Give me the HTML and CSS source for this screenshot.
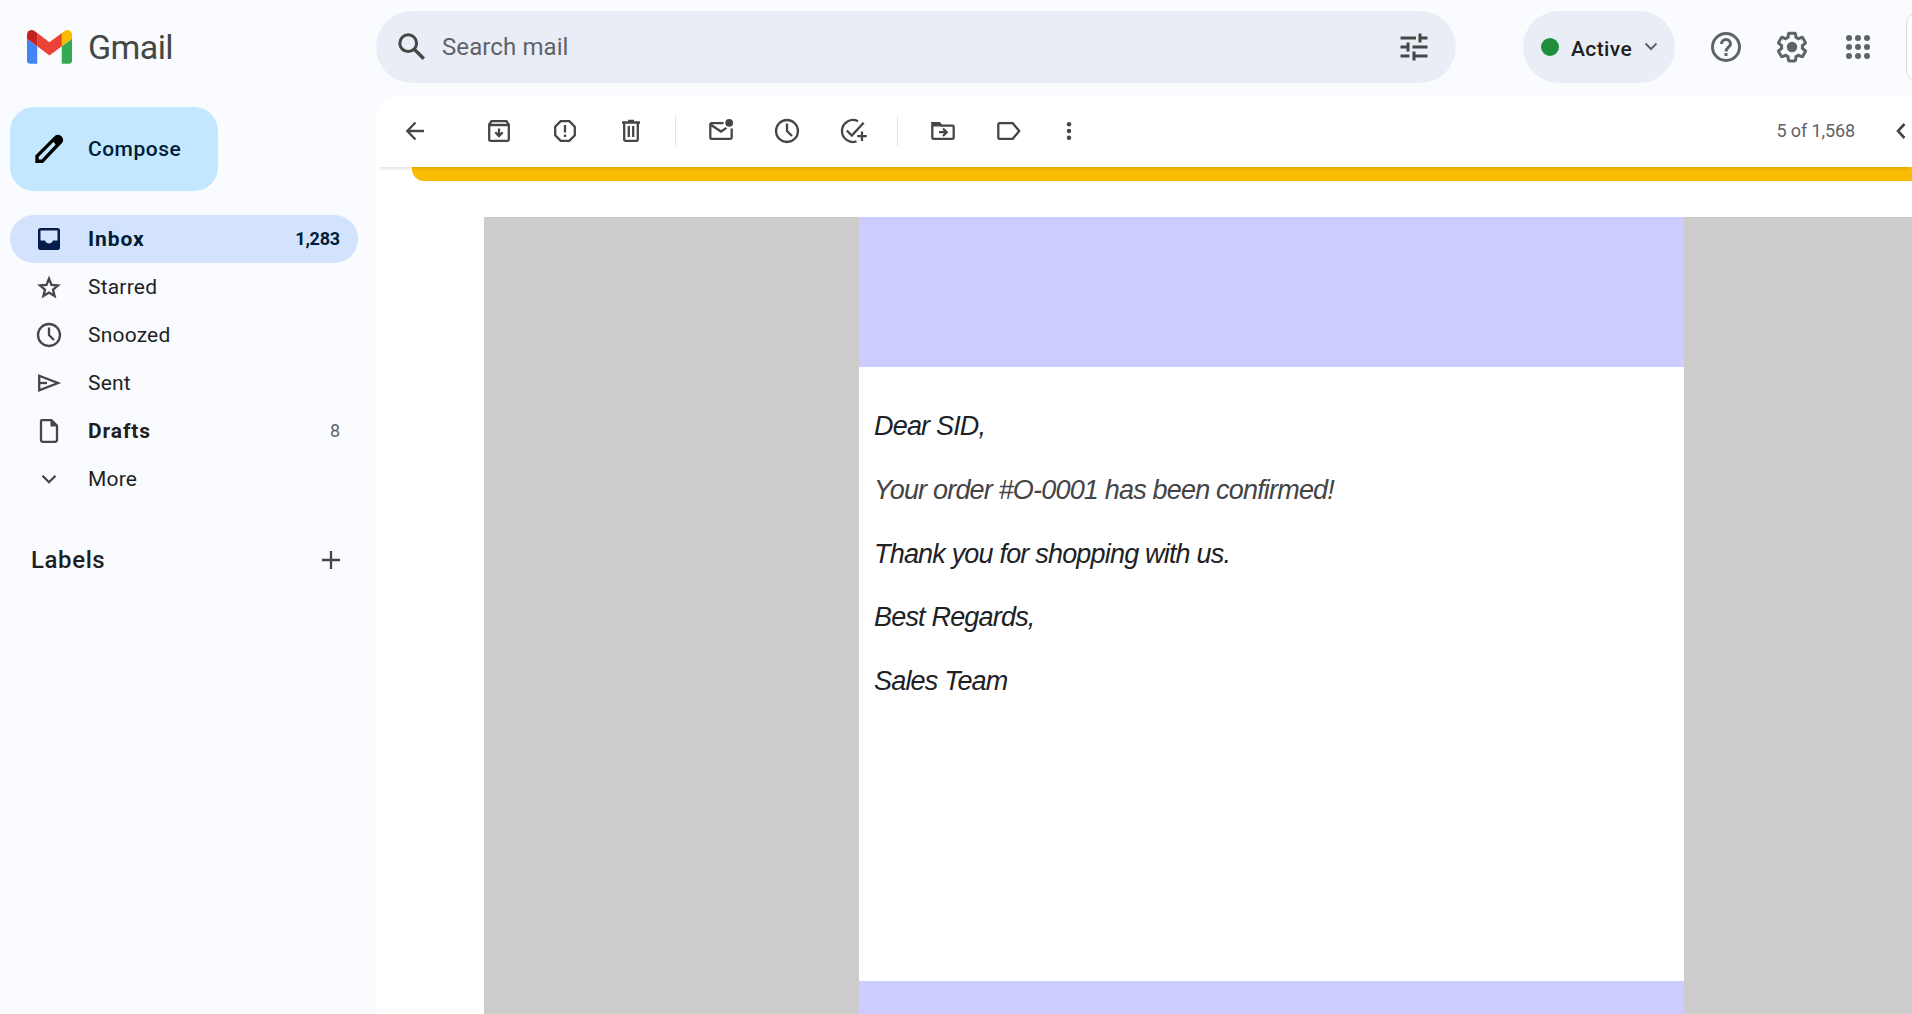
FILE: index.html
```html
<!DOCTYPE html>
<html lang="en">
<head>
<meta charset="utf-8">
<title>Gmail</title>
<link rel="stylesheet" href="styles.css">
</head>
<body>
<header class="topbar">
  <div class="brand">
    <svg class="brand-mark" viewBox="52 42 88 66"><path fill="#4285f4" d="M58 108h14V74L52 59v43c0 3.32 2.69 6 6 6"/><path fill="#34a853" d="M120 108h14c3.32 0 6-2.69 6-6V59l-20 15"/><path fill="#fbbc04" d="M120 48v26l20-15v-8c0-7.42-8.47-11.65-14.4-7.2"/><path fill="#ea4335" d="M72 74V48l24 18 24-18v26L96 92"/><path fill="#c5221f" d="M52 51v8l20 15V48l-5.6-4.2c-5.94-4.45-14.4-.22-14.4 7.2"/></svg>
    <span class="brand-name">Gmail</span>
  </div>
  <div class="search">
    <svg class="icon search-icon" viewBox="0 0 36 36"><circle cx="14.2" cy="14.2" r="8.4" stroke-width="3"/><path stroke-width="3.4" d="M20 20l9.8 9.8"/></svg>
    <span class="search-hint">Search mail</span>
    <svg class="icon tune-icon" viewBox="0 0 36 36"><path stroke-width="3" d="M4.5 9H20M24 4.5v9M24 9h7.500M4.500 18H12M12 13.500v9M16.500 18h15M4.500 27H13.500M18 22.500v9M18 27h13.500"/></svg>
  </div>
  <div class="status"><span class="status-dot"></span><span class="status-text">Active</span>
    <svg class="icon status-arrow" viewBox="0 0 14 10"><path stroke-width="2" d="M1.500 1.500L7 7l5.500-5.500"/></svg>
  </div>
  <div class="tools">
    <svg class="icon tool" viewBox="0 0 36 36"><circle cx="18" cy="18" r="13.500" stroke-width="3"/><path stroke-width="3" d="M13.500 15a4.500 4.500 0 1 1 9 0c0 3-4.500 3.400-4.500 7.500"/><path class="solid" d="M16.500 24h3v3h-3z"/></svg>
    <svg class="icon tool" viewBox="0 0 24 24"><path class="solid" d="M13.850 22.250h-3.700c-.740 0-1.360-.540-1.450-1.270l-.270-1.890c-.270-.140-.530-.290-.790-.460l-1.800.720c-.700.260-1.470-.030-1.810-.650L2.200 15.530c-.350-.660-.200-1.440.360-1.880l1.530-1.190c-.010-.150-.020-.300-.020-.460s.010-.310.020-.460l-1.520-1.190c-.590-.450-.740-1.260-.370-1.880l1.850-3.190c.340-.620 1.110-.900 1.790-.630l1.810.730c.260-.170.520-.320.780-.460l.270-1.910c.090-.700.710-1.250 1.440-1.250h3.700c.740 0 1.360.540 1.450 1.270l.270 1.890c.270.140.530.290.790.460l1.800-.720c.710-.260 1.480.030 1.820.650l1.840 3.180c.360.660.200 1.440-.360 1.880l-1.520 1.190c.010.150.020.300.020.460s-.010.310-.020.460l1.520 1.190c.560.450.720 1.230.370 1.860l-1.860 3.220c-.340.620-1.110.900-1.800.630l-1.800-.720c-.260.170-.520.320-.780.460l-.270 1.910c-.100.680-.720 1.220-1.460 1.220zm-3.230-2h2.760l.370-2.550.530-.220c.440-.180.880-.440 1.340-.780l.450-.340 2.380.960 1.380-2.400-2.030-1.580.070-.560c.030-.260.060-.510.060-.780s-.030-.530-.060-.780l-.070-.560 2.030-1.580-1.390-2.400-2.390.960-.450-.350c-.420-.320-.870-.580-1.330-.770l-.520-.220-.370-2.550h-2.760l-.370 2.550-.530.210c-.440.190-.880.440-1.340.790l-.450.330-2.380-.950-1.390 2.390 2.030 1.580-.070.560a7 7 0 0 0-.060.790c0 .260.020.530.060.780l.070.560-2.030 1.580 1.380 2.400 2.390-.960.450.350c.430.330.860.580 1.330.770l.530.220z"/><circle class="solid" cx="12" cy="12" r="3.500"/></svg>
    <svg class="icon tool" viewBox="0 0 36 36"><g class="solid"><circle cx="9" cy="9" r="3"/><circle cx="18" cy="9" r="3"/><circle cx="27" cy="9" r="3"/><circle cx="9" cy="18" r="3"/><circle cx="18" cy="18" r="3"/><circle cx="27" cy="18" r="3"/><circle cx="9" cy="27" r="3"/><circle cx="18" cy="27" r="3"/><circle cx="27" cy="27" r="3"/></g></svg>
  </div>
  <div class="account"></div>
</header>
<div class="workspace">
  <nav class="sidebar">
    <button class="compose"><svg class="icon compose-icon" viewBox="0 0 36 36"><path stroke-width="3.400" d="M6 30.300v-5.200L25 6.100a2.600 2.600 0 0 1 3.700 0l1 1a2.600 2.600 0 0 1 0 3.700L11.200 30.300z"/><path class="solid" d="M21.500 9.500l4-4h5.500v6l-4.500 4.500z"/></svg><span>Compose</span></button>
    <ul class="folders">
      <li class="folder current"><svg class="icon" viewBox="0 0 30 30"><path class="solid" fill-rule="evenodd" d="M6.500 4h17A2.500 2.500 0 0 1 26 6.500v17a2.500 2.500 0 0 1-2.500 2.500h-17A2.500 2.500 0 0 1 4 23.500v-17A2.500 2.500 0 0 1 6.500 4zM6.500 6.500v10H11c.800 1.800 2.200 3 4 3s3.200-1.200 4-3h4.500v-10z"/></svg><span class="name">Inbox</span><span class="count">1,283</span></li>
      <li class="folder"><svg class="icon" viewBox="0 0 30 30"><path d="M15 6.700l2.500 6.200 6.500.500-5 4.200 1.600 6.500L15 20.600l-5.600 3.500 1.600-6.500-5-4.200 6.500-.500z"/></svg><span class="name">Starred</span></li>
      <li class="folder"><svg class="icon" viewBox="0 0 30 30"><circle cx="15" cy="15" r="11"/><path d="M15 7.500V15l5 5"/></svg><span class="name">Snoozed</span></li>
      <li class="folder"><svg class="icon" viewBox="0 0 30 30"><path d="M5.200 7.700L24 15 5.200 22.300z"/><path d="M5.200 15H13"/></svg><span class="name">Sent</span></li>
      <li class="folder strong"><svg class="icon" viewBox="0 0 30 30"><path d="M8 4.200h9.500L23 9.700V24a1.800 1.800 0 0 1-1.800 1.800H8.800A1.800 1.800 0 0 1 7 24V5.200a1 1 0 0 1 1-1z"/><path class="solid" d="M16.500 4.500v6H23z"/></svg><span class="name">Drafts</span><span class="count">8</span></li>
      <li class="folder"><svg class="icon" viewBox="0 0 30 30"><path d="M8.500 11.700l6.500 6.500 6.500-6.500"/></svg><span class="name">More</span></li>
    </ul>
    <div class="labels"><h2>Labels</h2><svg class="icon" viewBox="0 0 30 30"><path d="M15 6v18M6 15h18"/></svg></div>
  </nav>
  <main class="panel">
    <div class="toolbar">
      <svg class="icon back" viewBox="0 0 30 30"><path d="M24 15H7.500M15.500 6.500L7.300 15l8.200 8.500"/></svg>
      <div class="group">
        <svg class="icon" viewBox="0 0 30 30"><path d="M5.200 8.500L7.500 5.200h15l2.300 3.300v14.800a1.500 1.500 0 0 1-1.500 1.500H6.700a1.500 1.500 0 0 1-1.500-1.500zM5.200 9h19.600M15 12.500v7M11.300 16.300L15 20l3.700-3.700"/></svg>
        <svg class="icon" viewBox="0 0 30 30"><path d="M10.700 5.200h8.600l5.500 5.500v8.600l-5.500 5.500h-8.600l-5.500-5.500v-8.600zM15 9v7.500M15 18.500V21"/></svg>
        <svg class="icon" viewBox="0 0 30 30"><path d="M6 6.500h18M12 5h6M8.200 7v16.300a1.500 1.500 0 0 0 1.500 1.500h10.600a1.500 1.500 0 0 0 1.500-1.500V7M12.800 10v11M17.200 10v11"/></svg>
      </div>
      <span class="divider"></span>
      <div class="group">
        <svg class="icon" viewBox="0 0 30 30"><path d="M17.500 7.200H5.500a1.200 1.200 0 0 0-1.200 1.200v13.200a1.200 1.200 0 0 0 1.200 1.200h19a1.200 1.200 0 0 0 1.200-1.200v-9M4.800 8.700L15 15.500l5.500-3.600"/><circle class="solid" cx="23.200" cy="6.800" r="3.900"/></svg>
        <svg class="icon" viewBox="0 0 30 30"><circle cx="15" cy="15" r="11"/><path d="M15 7.500V15l5 5"/></svg>
        <svg class="icon" viewBox="0 0 30 30"><path d="M20 5.200A11 11 0 1 0 18.500 25.400M8.800 14.500l5 5L25.700 6.700M24 15.500v9.500M19.200 20.200h9.600"/></svg>
      </div>
      <span class="divider"></span>
      <div class="group">
        <svg class="icon" viewBox="0 0 30 30"><path d="M4.300 7.200h7l2.500 2.500h10.700a1.200 1.200 0 0 1 1.200 1.200v10.700a1.200 1.200 0 0 1-1.200 1.200h-19a1.200 1.200 0 0 1-1.200-1.200zM11 16.200h7M15 12.500l3.700 3.700L15 20"/><path class="solid" d="M4.500 6.500h7l3.500 4H4.500z"/></svg>
        <svg class="icon" viewBox="0 0 30 30"><path d="M5.500 7.200h13.200l6.500 7.800-6.500 7.800H5.500a1.200 1.200 0 0 1-1.200-1.200V8.400a1.200 1.200 0 0 1 1.200-1.200z"/></svg>
        <svg class="icon more" viewBox="0 0 30 30"><g class="solid"><circle cx="15" cy="8.200" r="2.200"/><circle cx="15" cy="15" r="2.200"/><circle cx="15" cy="21.800" r="2.200"/></g></svg>
      </div>
      <span class="position">5 of 1,568</span>
      <svg class="icon newer" viewBox="0 0 12 18"><path stroke-width="2.600" d="M9.500 2L3 9l6.500 7"/></svg>
    </div>
    <div class="notice"></div>
    <article class="message">
      <div class="letter">
        <div class="band"></div>
        <div class="body"><p>Dear SID,</p><p class="soft">Your order #O-0001 has been confirmed!</p><p>Thank you for shopping with us.</p><p>Best Regards,</p><p>Sales Team</p></div>
        <div class="band"></div>
      </div>
    </article>
  </main>
</div>
</body>
</html>
```
FILE: styles.css
```css
* { box-sizing: border-box; }
body { margin: 0; height: 1014px; overflow: hidden; display: flex; flex-direction: column; background: #f9fbff; color: #1f1f1f; font-family: Roboto, "Liberation Sans", sans-serif; }
.icon { width: 30px; height: 30px; flex: none; fill: none; stroke: #444746; stroke-width: 2.3; color: #444746; }
.icon .solid { fill: currentColor; stroke: none; }

.topbar { height: 95px; flex: none; display: flex; align-items: flex-start; padding-top: 11px; }
.topbar > * { flex: none; }
.brand { width: 376px; height: 72px; padding-left: 27px; display: flex; align-items: center; gap: 16px; }
.brand-mark { flex: none; width: 45px; height: 33.750px; }
.brand-name { font-size: 34px; letter-spacing: -.6px; color: #444746; }
.search { width: 1080px; height: 72px; border-radius: 36px; background: #e9eef6; display: flex; align-items: center; padding: 0 24px 0 18px; }
.icon.search-icon, .icon.tune-icon, .icon.tool { width: 36px; height: 36px; }
.search-hint { flex: 1; margin-left: 12px; font-size: 24px; letter-spacing: .1px; color: #5f6368; }
.status { width: 152px; height: 72px; margin-left: 67px; border-radius: 36px; background: #e9eef6; display: flex; align-items: center; padding-left: 18px; }
.status-dot { width: 18px; height: 18px; border-radius: 50%; background: #1e8e3e; margin-right: 12px; }
.status-text { font-size: 21px; font-weight: 500; width: 73px; padding-top: 3px; letter-spacing: .4px; }
.icon.status-arrow { width: 14px; height: 10px; stroke: #5f6368; }
.tools { display: flex; gap: 30px; margin: 18px 0 0 33px; }
.icon.tool { stroke: #5f6368; color: #5f6368; }
.account { width: 60px; height: 70px; margin: 1px 0 0 30px; border: 1px solid #dadce0; border-radius: 12px; background: #fff; }

.workspace { display: flex; flex: 1; min-height: 0; }
.sidebar { width: 376px; flex: none; padding: 12px 18px 0 10px; }
.compose { width: 208px; height: 84px; border: 0; border-radius: 24px; background: #c2e7ff; color: #001d35; font: 500 21px Roboto, sans-serif; letter-spacing: .5px; display: flex; align-items: center; gap: 21px; padding: 0 0 0 21px; }
.icon.compose-icon { width: 36px; height: 36px; stroke: #000; color: #000; }
.folders { list-style: none; margin: 24px 0 0; padding: 0; }
.folder { height: 48px; border-radius: 24px; display: flex; align-items: center; padding: 0 18px 0 24px; font-size: 21px; }
.name { flex: 1; margin-left: 24px; letter-spacing: .2px; }
.count { font-size: 18px; color: #5f6368; padding-bottom: 2px; }
.current { background: #d3e3fd; color: #001d35; font-weight: 700; }
.current .icon { color: #041e49; }
.current .count { color: #001d35; letter-spacing: -.2px; }
.current .name, .strong .name { font-weight: 700; letter-spacing: .9px; }
.labels { display: flex; align-items: center; justify-content: space-between; padding: 0 12px 0 21px; margin-top: 30px; height: 54px; }
.labels h2 { margin: 0; font-size: 24px; font-weight: 500; letter-spacing: .6px; }

.panel { flex: 1; min-width: 0; background: #fff; border-top-left-radius: 24px; overflow: hidden; }
.toolbar { height: 72px; display: flex; align-items: center; padding-left: 24px; box-shadow: 0 5px 3px -3px rgba(0,0,0,.1); position: relative; background: #fff; border-top-left-radius: 24px; }
.group { display: flex; gap: 36px; }
.back { margin-right: 54px; }
.divider { width: 1px; height: 30px; background: #e3e5e8; margin: 0 30.500px 0 28.500px; }
.more { margin-left: -6px; }
.position { margin-left: auto; font-size: 18px; letter-spacing: -.1px; color: #5f6368; padding-bottom: 2px; }
.icon.newer { width: 12px; height: 18px; margin: 0 5px 0 40px; }
.notice { height: 14px; margin-left: 36px; background: #fbbc04; border-bottom-left-radius: 12px; }
.message { margin: 36px 0 0 108px; height: 797px; background: #ccc; padding-left: 375px; }
.letter { width: 825px; }
.band { height: 150px; background: #ccf; }
.body { height: 614px; background: #fff; padding: 39px 15px; color: #202124; }
.body p { margin: 0 0 23.750px; font: italic 27px/40px "Liberation Sans", Arial, sans-serif; letter-spacing: -.81px; }
.body .soft { color: #444; }
```
